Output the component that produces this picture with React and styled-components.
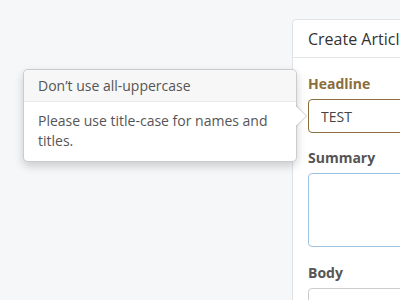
import React from "react";
import styled, { createGlobalStyle } from "styled-components";

const Global = createGlobalStyle`
  html, body { margin: 0; padding: 0; }
  body {
    background: #f5f7f9;
    font-family: "Open Sans", "Noto Sans", sans-serif;
    width: 400px;
    height: 300px;
    overflow: hidden;
  }
`;

const Stage = styled.div`
  position: relative;
  width: 400px;
  height: 300px;
  display: flex;
  align-items: flex-start;
  padding: 19px 0 0 292px;
  box-sizing: border-box;
`;

const Panel = styled.section`
  flex: 0 0 auto;
  width: 320px;
  height: 320px;
  background: #fff;
  border: 1px solid #dfe3e7;
  border-radius: 4px 0 0 0;
`;

const PanelHeader = styled.header`
  height: 37px;
  padding: 0 15px;
  display: flex;
  align-items: center;
  border-bottom: 1px solid #e3e6e9;
  font-size: 16px;
  color: #333;
  white-space: nowrap;
`;

const Form = styled.form`
  padding: 16px 15px 0;
  display: flex;
  flex-direction: column;
`;

const Field = styled.div`
  display: flex;
  flex-direction: column;
  margin-bottom: ${(p) => p.$mb || 15}px;
`;

const Label = styled.label`
  font-size: 14px;
  font-weight: 700;
  line-height: 20px;
  margin-bottom: 5px;
  color: ${(p) => (p.$warn ? "#8a6d3b" : "#555")};
`;

const Input = styled.input`
  box-sizing: border-box;
  height: 34px;
  width: 100%;
  padding: 0 12px;
  font-family: inherit;
  font-size: 14px;
  color: #444;
  background: #fff;
  border: 1px solid ${(p) => (p.$warn ? "#8a6d3b" : "#ccc")};
  border-radius: 4px;
  outline: none;
`;

const TextArea = styled.textarea`
  box-sizing: border-box;
  height: 74px;
  width: 100%;
  resize: none;
  font-family: inherit;
  border: 1px solid #9ec3e3;
  border-radius: 4px;
  outline: none;
`;

const Popover = styled.div`
  position: absolute;
  left: 23px;
  top: 69px;
  width: 274px;
  box-sizing: border-box;
  background: #fff;
  border: 1px solid rgba(0, 0, 0, 0.2);
  border-radius: 5px;
  box-shadow: 0 4px 10px rgba(0, 0, 0, 0.18);
  color: #555;
  font-size: 14px;

  &::before,
  &::after {
    content: "";
    position: absolute;
    top: 35px;
    border-style: solid;
    border-color: transparent;
  }
  &::before {
    right: -11px;
    border-width: 11px 0 11px 11px;
    border-left-color: rgba(0, 0, 0, 0.2);
  }
  &::after {
    right: -10px;
    top: 36px;
    border-width: 10px 0 10px 10px;
    border-left-color: #fff;
  }
`;

const PopoverTitle = styled.h3`
  margin: 0;
  padding: 0 14px;
  height: 31px;
  display: flex;
  align-items: center;
  font-size: 14px;
  font-weight: 400;
  background: #f7f7f7;
  border-bottom: 1px solid #ebebeb;
  border-radius: 5px 5px 0 0;
`;

const PopoverBody = styled.div`
  padding: 9px 14px 10px;
  line-height: 20px;
`;

export default function App() {
  return (
    <>
      <Global />
      <Stage>
        <Panel>
          <PanelHeader>Create Article</PanelHeader>
          <Form>
            <Field>
              <Label $warn>Headline</Label>
              <Input $warn defaultValue="TEST" />
            </Field>
            <Field $mb={16}>
              <Label>Summary</Label>
              <TextArea />
            </Field>
            <Field>
              <Label>Body</Label>
              <Input />
            </Field>
          </Form>
        </Panel>
        <Popover>
          <PopoverTitle>Don’t use all-uppercase</PopoverTitle>
          <PopoverBody>Please use title-case for names and titles.</PopoverBody>
        </Popover>
      </Stage>
    </>
  );
}
